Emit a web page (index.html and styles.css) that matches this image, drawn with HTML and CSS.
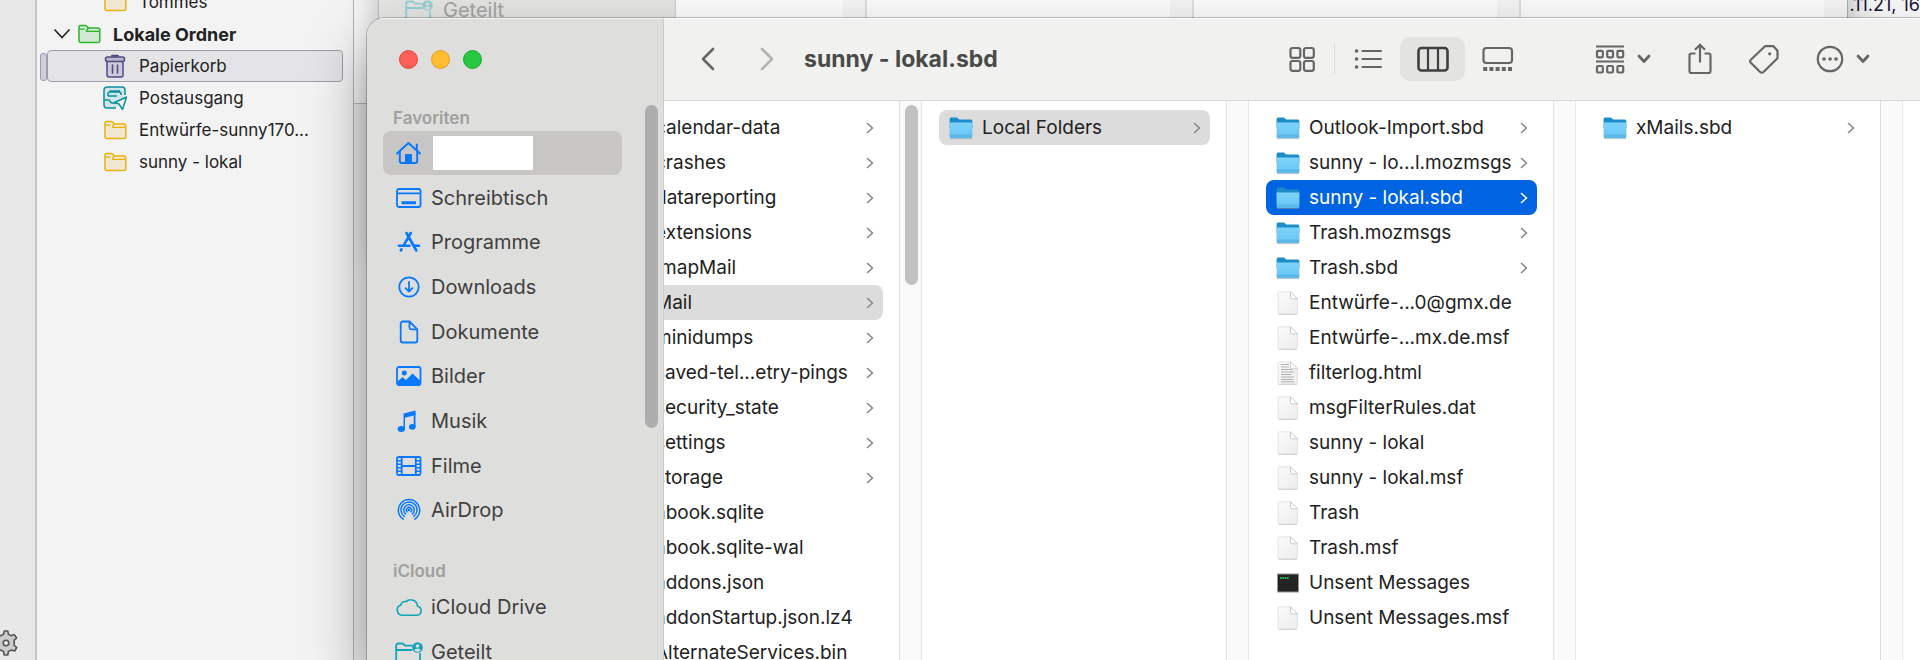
FILE: index.html
```html
<!DOCTYPE html>
<html lang="de">
<head>
  <meta charset="UTF-8" />
  <meta name="viewport" content="width=device-width, initial-scale=1.0" />
  <title>sunny - lokal.sbd</title>
  <link rel="stylesheet" href="styles.css">
</head>
<body>
  <!-- Shared icons -->
  <svg class="sprite" aria-hidden="true">
    <defs>
      <linearGradient id="folderFront" x1="0" y1="0" x2="0" y2="1">
        <stop offset="0" stop-color="#7fd3fb" />
        <stop offset="0.75" stop-color="#6bc8f6" />
        <stop offset="0.8" stop-color="#58b5e6" />
        <stop offset="1" stop-color="#5cbdec" />
      </linearGradient>
      <linearGradient id="paper" x1="0" y1="0" x2="1" y2="1">
        <stop offset="0" stop-color="#fbfbfb" />
        <stop offset="1" stop-color="#ececec" />
      </linearGradient>
    </defs>
    <symbol id="folder" viewBox="0 0 24 24">
      <path d="M1 22.6h22" stroke="#8a9aa5" stroke-width="1" opacity=".6" />
      <path d="M.6 3a1.6 1.6 0 0 1 1.6-1.6h5.6c1 0 1.400 2.200 3 2.200h11a1.600 1.600 0 0 1 1.600 1.600V12H.6z" fill="#1d8dca" />
      <path d="M.6 6.400h22.800v14.300a1.400 1.400 0 0 1-1.400 1.400H2a1.400 1.400 0 0 1-1.400-1.400z" fill="url(#folderFront)" />
    </symbol>
    <symbol id="file" viewBox="0 0 24 24">
      <path d="M4 .8h10.500l7 7v13.700a1.700 1.700 0 0 1-1.700 1.700H3.700A1.700 1.700 0 0 1 2 21.500V2.500A1.700 1.700 0 0 1 4 .8z" fill="url(#paper)" stroke="#dedede" stroke-width=".8" />
      <path d="M2.500 23.300h18.500" stroke="#cfcfcf" stroke-width="1" />
      <path d="M14.500.8v5.500a1.500 1.500 0 0 0 1.500 1.500h5.500z" fill="#fff" stroke="#c6c6c6" stroke-width=".9" />
    </symbol>
    <symbol id="textfile" viewBox="0 0 24 24">
      <use href="#file" />
      <path d="M5 3.500h8M5 6h8M5 8.500h11M5 11h13M5 13.500h10M5 16h13M5 18.500h12M5 20.800h13" stroke="#b2b2b2" stroke-width="1" />
    </symbol>
    <symbol id="exec" viewBox="0 0 24 24">
      <path d="M1 2.500h22v19H1z" fill="#8e979b" />
      <path d="M2 3.500h20v17H2z" fill="#242424" />
      <path d="M4 7h9" stroke="#34b054" stroke-width="2" stroke-dasharray="1.700 .6" />
    </symbol>
    <symbol id="more" viewBox="0 0 8 12">
      <path d="M1.500 1.500 6.500 6l-5 4.500" fill="none" stroke="currentColor" stroke-width="1.600" stroke-linecap="round" stroke-linejoin="round" />
    </symbol>
    <symbol id="caret" viewBox="0 0 14 10">
      <path d="M2 2l5 5.500L12 2" fill="none" stroke="currentColor" stroke-width="2.800" stroke-linecap="round" stroke-linejoin="round" />
    </symbol>
    <symbol id="mailfolder" viewBox="0 0 24 20">
      <path d="M2 17V3a1.500 1.500 0 0 1 1.500-1.500h5c1.500 0 2 2.500 3.500 2.500h9A1.700 1.700 0 0 1 22.800 5.700v11a1.800 1.800 0 0 1-1.800 1.800H3.500A1.600 1.600 0 0 1 2 17z" fill="currentColor" fill-opacity=".16" stroke="currentColor" stroke-width="1.500" />
      <path d="M2.500 5.200h5M9 7.300h13M9 7.300 11.500 4" fill="none" stroke="currentColor" stroke-width="1.300" />
    </symbol>
    <symbol id="shared" viewBox="0 0 28 24">
      <path d="M25 14v6a2 2 0 0 1-2 2H3.200a2 2 0 0 1-2-2V5.500a2 2 0 0 1 2-2h4.500l2.300 2.200h7M1.200 10h15.500" fill="none" stroke="currentColor" stroke-width="1.800" stroke-linecap="round" />
      <circle cx="22.500" cy="7.500" r="5.300" fill="currentColor" />
      <circle cx="22.500" cy="6" r="1.800" fill="#dededc" />
      <path d="M19.300 10.400a3.300 2.600 0 0 1 6.400 0 4.600 4.600 0 0 1-6.400 0z" fill="#dededc" />
    </symbol>
  </svg>

  <div class="desktop">
    <!-- Mail window -->
    <div class="mail">
      <div class="rail">
        <button class="settings" aria-label="Einstellungen">
          <svg viewBox="0 0 26 26"><path d="M10.600 4.200 11.200 1h3.600l.6 3.200a9 9 0 0 1 2.800 1.600l3.100-1.200 2.400 3.400-2.700 2.300c.4 1.700.4 3.300 0 4.900l2.700 2.300-2 3.500-3.500-1a9 9 0 0 1-2.800 1.600l-.6 3.400h-3.600l-.6-3.400a9 9 0 0 1-2.800-1.600l-3.500 1-2-3.500L5 15.200c-.4-1.600-.4-3.200 0-4.900L2.300 8l2.400-3.400 3.100 1.200a9 9 0 0 1 2.800-1.600z" fill="#ccc" stroke="#555" stroke-width="1.600" stroke-linejoin="round" /><circle cx="13" cy="13" r="2.800" fill="#eee" stroke="#555" stroke-width="1.600" /></svg>
        </button>
      </div>
      <div class="folder-pane">
        <ul class="folder-tree">
          <li class="tree-item yellow"><svg class="tree-icon"><use href="#mailfolder" /></svg>Tommes</li>
          <li class="tree-item account">
            <svg class="twisty" viewBox="0 0 18 12"><path d="M1.500 1.500 9 9.500l7.500-8" fill="none" stroke="#222" stroke-width="1.600" /></svg>
            <svg class="tree-icon green"><use href="#mailfolder" /></svg>Lokale Ordner
          </li>
          <li class="tree-item selected">
            <svg class="tree-icon trash" viewBox="0 0 24 24"><path d="M4 7h16v14a2 2 0 0 1-2 2H6a2 2 0 0 1-2-2z" fill="#cdcbdb" stroke="#4f4a80" stroke-width="1.500" /><rect x="2.500" y="3" width="19" height="4.500" rx="2" fill="#b9b6cf" stroke="#4f4a80" stroke-width="1.500" /><path d="M9 1.800h6" stroke="#4f4a80" stroke-width="2" stroke-linecap="round" /><path d="M9.500 11v8M14.500 11v8" stroke="#4f4a80" stroke-width="1.600" stroke-linecap="round" /></svg>
            Papierkorb
          </li>
          <li class="tree-item">
            <svg class="tree-icon outbox" viewBox="0 0 24 24" fill="none" stroke="#0d8f9c" stroke-width="1.500" stroke-linejoin="round"><path d="M13 22H4a3 3 0 0 1-3-3V4a3 3 0 0 1 3-3h15a3 3 0 0 1 3 3v5" fill="#cfe7ea" /><path d="M5 10V8a2 2 0 0 1 2-2h9a2 2 0 0 1 2 2v1M7 6V5h10" /><path d="M1.500 14h4.500c1 0 1 3 3 3h4M5 10h9" /><path d="M23.500 11 11.500 16.500l4.500 1.500 3.500 5.500z" fill="#f3f3f3" /></svg>
            Postausgang
          </li>
          <li class="tree-item yellow"><svg class="tree-icon"><use href="#mailfolder" /></svg>Entwürfe-sunny170...</li>
          <li class="tree-item yellow"><svg class="tree-icon"><use href="#mailfolder" /></svg>sunny - lokal</li>
        </ul>
      </div>
      <div class="message-pane">
        <div class="message-head"><span class="message-date">.11.21, 16</span></div>
      </div>
    </div>

    <!-- Finder window in the background -->
    <div class="back-window">
      <div class="back-sidebar"><svg class="side-icon"><use href="#shared" /></svg>Geteilt</div>
      <div class="back-columns">
        <div class="back-column first"></div>
        <div class="back-column"></div>
        <div class="back-column"></div>
        <div class="back-column"></div>
      </div>
    </div>

    <!-- Active Finder window -->
    <main class="finder">
      <aside class="sidebar">
        <div class="lights">
          <button class="light red" aria-label="Schließen"></button>
          <button class="light amber" aria-label="Minimieren"></button>
          <button class="light lime" aria-label="Zoomen"></button>
        </div>
        <div class="sidebar-body">
          <nav class="sidebar-nav">
            <h2 class="side-title">Favoriten</h2>
            <ul class="side-list">
              <li><a href="#" class="side-link current" aria-label="Benutzerordner"><svg class="side-icon" viewBox="0 0 28 24" fill="none" stroke="currentColor" stroke-width="2" stroke-linecap="round" stroke-linejoin="round"><path d="M2 12.500 13.500 2 25 12.500" /><path d="M4.800 10.500V20a2 2 0 0 0 2 2h13.400a2 2 0 0 0 2-2v-9.500M21.800 8.500V3.500" /><path d="M11 22v-8h5v8z" fill="currentColor" /></svg><span class="user-name"></span></a></li>
              <li><a href="#" class="side-link"><svg class="side-icon" viewBox="0 0 28 24" fill="none" stroke="currentColor" stroke-width="1.800"><rect x="2" y="3" width="23.500" height="18" rx="2" /><path d="M2 7.300h23.500" /><path d="M6.500 16.800h14.500" stroke-width="3" /></svg>Schreibtisch</a></li>
              <li><a href="#" class="side-link"><svg class="side-icon" viewBox="0 0 28 24" fill="none" stroke="currentColor" stroke-width="2.600" stroke-linecap="round"><path d="M15.800 3 8.500 15.700M11.500 3l9.800 17.500M4 15.700h10.500M19.500 15.700H24M6.500 19.300l-.7 1.200" /></svg>Programme</a></li>
              <li><a href="#" class="side-link"><svg class="side-icon" viewBox="0 0 28 24" fill="none" stroke="currentColor" stroke-width="1.800" stroke-linecap="round" stroke-linejoin="round"><circle cx="14" cy="12" r="9.700" /><path d="M14 7v9.500M10.500 13.200l3.500 3.500 3.500-3.500" /></svg>Downloads</a></li>
              <li><a href="#" class="side-link"><svg class="side-icon" viewBox="0 0 28 24" fill="none" stroke="currentColor" stroke-width="1.800" stroke-linejoin="round"><path d="M14.500 1.500H7.700a2 2 0 0 0-2 2v17a2 2 0 0 0 2 2h12.600a2 2 0 0 0 2-2V9.300z" /><path d="M14.500 1.500v6a1.800 1.800 0 0 0 1.800 1.800h6" /></svg>Dokumente</a></li>
              <li><a href="#" class="side-link"><svg class="side-icon" viewBox="0 0 28 24"><rect x="2" y="3" width="23.500" height="18" rx="2" fill="none" stroke="currentColor" stroke-width="1.800" /><circle cx="9.300" cy="8.900" r="2.500" fill="currentColor" /><path d="M2.500 17.500 7.500 13l3.500 3 6.500-6.500 7.500 7V20a1 1 0 0 1-1 1h-20.500a1 1 0 0 1-1-1z" fill="currentColor" /></svg>Bilder</a></li>
              <li><a href="#" class="side-link"><svg class="side-icon" viewBox="0 0 28 24" fill="currentColor"><path d="M8.500 4.500 20.500 1.500V6L10 8.700V20H8.500z" /><path d="M18.700 4h1.800v14h-1.800z" /><ellipse cx="6.300" cy="20" rx="3.700" ry="2.900" /><ellipse cx="17.300" cy="17.800" rx="3.400" ry="2.900" /></svg>Musik</a></li>
              <li><a href="#" class="side-link"><svg class="side-icon" viewBox="0 0 28 24" fill="none" stroke="currentColor" stroke-width="1.800"><rect x="2" y="3" width="23.500" height="18" rx="1.500" /><path d="M6.700 3v18M20.800 3v18M6.700 12h14.100" /><path d="M2 6.800h4.700M2 10.300h4.700M2 13.800h4.700M2 17.300h4.700M20.800 6.800h4.700M20.800 10.300h4.700M20.800 13.800h4.700M20.800 17.300h4.700" stroke-width="1.400" /></svg>Filme</a></li>
              <li><a href="#" class="side-link"><svg class="side-icon" viewBox="0 0 28 24" fill="none" stroke="currentColor" stroke-width="1.500" stroke-linecap="round"><path d="M8.200 21.200A10.700 10.700 0 1 1 19.800 21.200" /><path d="M9.300 18.400A8 8 0 1 1 18.700 18.400" /><path d="M10.600 16A5.200 5.200 0 1 1 17.400 16" /><path d="M12 13.800a2.600 2.600 0 1 1 4 0" /><circle cx="14" cy="12" r=".6" fill="currentColor" /></svg>AirDrop</a></li>
            </ul>
            <h2 class="side-title cloud-title">iCloud</h2>
            <ul class="side-list cloud">
              <li><a href="#" class="side-link"><svg class="side-icon" viewBox="0 0 28 24" fill="none" stroke="currentColor" stroke-width="1.600" stroke-linejoin="round"><path d="M7 20.200a5.200 5.200 0 0 1-1.200-10.100 3.900 3.900 0 0 1 5.200-3.400A6.800 6.800 0 0 1 22.500 11.300a4.500 4.500 0 0 1-.5 8.900z" /></svg>iCloud Drive</a></li>
              <li><a href="#" class="side-link"><svg class="side-icon"><use href="#shared" /></svg>Geteilt</a></li>
            </ul>
          </nav>
          <div class="thumb sidebar-thumb"></div>
        </div>
      </aside>

      <section class="content">
        <header class="toolbar">
          <div class="history">
            <button class="tool" aria-label="Zurück"><svg class="arrow" viewBox="0 0 14 24"><path d="M12 2 2 12l10 10" /></svg></button>
            <button class="tool faded" aria-label="Vor"><svg class="arrow" viewBox="0 0 14 24"><path d="M2 2l10 10L2 22" /></svg></button>
          </div>
          <h1 class="title">sunny - lokal.sbd</h1>
          <div class="views">
            <button class="view" aria-label="Symbole"><svg viewBox="0 0 32 26"><rect x="4.500" y="2" width="9.800" height="9.800" rx="2" /><rect x="18" y="2" width="9.800" height="9.800" rx="2" /><rect x="4.500" y="15" width="9.800" height="9.800" rx="2" /><rect x="18" y="15" width="9.800" height="9.800" rx="2" /></svg></button>
            <span class="divider"></span>
            <button class="view" aria-label="Liste"><svg viewBox="0 0 32 26"><path d="M10.500 5H29M10.500 13H29M10.500 21H29" stroke-linecap="round" /><path d="M4.500 5h.1M4.500 13h.1M4.500 21h.1" stroke-width="3.600" stroke-linecap="round" /></svg></button>
            <button class="view active" aria-label="Spalten"><svg viewBox="0 0 32 26"><rect x="1.500" y="2" width="29" height="22.500" rx="3" stroke-width="2.600" /><path d="M11 2v22.500M21 2v22.500" /></svg></button>
            <button class="view" aria-label="Galerie"><svg viewBox="0 0 32 26"><rect x="1.500" y="2" width="28.500" height="15" rx="3" /><path d="M1.200 23H31" stroke-width="4" stroke-dasharray="4 2.200" /></svg></button>
          </div>
          <div class="actions">
            <button class="tool menu" aria-label="Gruppieren"><svg class="group" viewBox="0 0 30 30"><path d="M1 2.500h28M1 17.500h28" /><rect x="2" y="6.800" width="5.800" height="6.500" rx="1" /><rect x="12.200" y="6.800" width="5.800" height="6.500" rx="1" /><rect x="22.400" y="6.800" width="5.800" height="6.500" rx="1" /><rect x="2" y="22" width="5.800" height="6.500" rx="1" /><rect x="12.200" y="22" width="5.800" height="6.500" rx="1" /><rect x="22.400" y="22" width="5.800" height="6.500" rx="1" /></svg><svg class="caret"><use href="#caret" /></svg></button>
            <button class="tool" aria-label="Teilen"><svg class="share" viewBox="0 0 24 32"><path d="M7.500 10.500H3.500a2 2 0 0 0-2 2V28a2 2 0 0 0 2 2h17a2 2 0 0 0 2-2V12.500a2 2 0 0 0-2-2h-4M12 19.500V2M7 6.800 12 1.800l5 5" /></svg></button>
            <button class="tool" aria-label="Tags"><svg class="tag" viewBox="0 0 30 30"><path d="M16 2.200h8.500l4 4.500v7.500L14.500 28a2.500 2.500 0 0 1-3.300 0L1.800 18.800a2 2 0 0 1 0-3z" stroke-linejoin="round" /><circle cx="20.700" cy="9.800" r="1.600" fill="currentColor" stroke="none" /></svg></button>
            <button class="tool menu" aria-label="Aktion"><svg class="dots" viewBox="0 0 28 28"><circle cx="14" cy="14" r="12.200" /><path d="M8 14h.1M14 14h.1M20 14h.1" stroke-width="3.600" stroke-linecap="round" /></svg><svg class="caret"><use href="#caret" /></svg></button>
          </div>
        </header>

        <div class="columns">
          <div class="column clipped">
            <ul class="items">
              <li class="item"><svg class="icon"><use href="#folder" /></svg><span class="name">calendar-data</span><svg class="go"><use href="#more" /></svg></li>
              <li class="item"><svg class="icon"><use href="#folder" /></svg><span class="name">crashes</span><svg class="go"><use href="#more" /></svg></li>
              <li class="item"><svg class="icon"><use href="#folder" /></svg><span class="name">datareporting</span><svg class="go"><use href="#more" /></svg></li>
              <li class="item"><svg class="icon"><use href="#folder" /></svg><span class="name">extensions</span><svg class="go"><use href="#more" /></svg></li>
              <li class="item"><svg class="icon"><use href="#folder" /></svg><span class="name">ImapMail</span><svg class="go"><use href="#more" /></svg></li>
              <li class="item open"><svg class="icon"><use href="#folder" /></svg><span class="name">Mail</span><svg class="go"><use href="#more" /></svg></li>
              <li class="item"><svg class="icon"><use href="#folder" /></svg><span class="name">minidumps</span><svg class="go"><use href="#more" /></svg></li>
              <li class="item"><svg class="icon"><use href="#folder" /></svg><span class="name">saved-tel...etry-pings</span><svg class="go"><use href="#more" /></svg></li>
              <li class="item"><svg class="icon"><use href="#folder" /></svg><span class="name">security_state</span><svg class="go"><use href="#more" /></svg></li>
              <li class="item"><svg class="icon"><use href="#folder" /></svg><span class="name">settings</span><svg class="go"><use href="#more" /></svg></li>
              <li class="item"><svg class="icon"><use href="#folder" /></svg><span class="name">storage</span><svg class="go"><use href="#more" /></svg></li>
              <li class="item"><svg class="icon"><use href="#file" /></svg><span class="name">abook.sqlite</span></li>
              <li class="item"><svg class="icon"><use href="#file" /></svg><span class="name">abook.sqlite-wal</span></li>
              <li class="item"><svg class="icon"><use href="#file" /></svg><span class="name">addons.json</span></li>
              <li class="item"><svg class="icon"><use href="#file" /></svg><span class="name">addonStartup.json.lz4</span></li>
              <li class="item"><svg class="icon"><use href="#file" /></svg><span class="name">AlternateServices.bin</span></li>
            </ul>
            <div class="track"><div class="thumb column-thumb"></div></div>
          </div>

          <div class="column">
            <ul class="items">
              <li class="item open"><svg class="icon"><use href="#folder" /></svg><span class="name">Local Folders</span><svg class="go"><use href="#more" /></svg></li>
            </ul>
            <div class="track"></div>
          </div>

          <div class="column">
            <ul class="items">
              <li class="item"><svg class="icon"><use href="#folder" /></svg><span class="name">Outlook-Import.sbd</span><svg class="go"><use href="#more" /></svg></li>
              <li class="item"><svg class="icon"><use href="#folder" /></svg><span class="name">sunny - lo...l.mozmsgs</span><svg class="go"><use href="#more" /></svg></li>
              <li class="item selected"><svg class="icon"><use href="#folder" /></svg><span class="name">sunny - lokal.sbd</span><svg class="go"><use href="#more" /></svg></li>
              <li class="item"><svg class="icon"><use href="#folder" /></svg><span class="name">Trash.mozmsgs</span><svg class="go"><use href="#more" /></svg></li>
              <li class="item"><svg class="icon"><use href="#folder" /></svg><span class="name">Trash.sbd</span><svg class="go"><use href="#more" /></svg></li>
              <li class="item"><svg class="icon"><use href="#file" /></svg><span class="name">Entwürfe-...0@gmx.de</span></li>
              <li class="item"><svg class="icon"><use href="#file" /></svg><span class="name">Entwürfe-...mx.de.msf</span></li>
              <li class="item"><svg class="icon"><use href="#textfile" /></svg><span class="name">filterlog.html</span></li>
              <li class="item"><svg class="icon"><use href="#file" /></svg><span class="name">msgFilterRules.dat</span></li>
              <li class="item"><svg class="icon"><use href="#file" /></svg><span class="name">sunny - lokal</span></li>
              <li class="item"><svg class="icon"><use href="#file" /></svg><span class="name">sunny - lokal.msf</span></li>
              <li class="item"><svg class="icon"><use href="#file" /></svg><span class="name">Trash</span></li>
              <li class="item"><svg class="icon"><use href="#file" /></svg><span class="name">Trash.msf</span></li>
              <li class="item"><svg class="icon"><use href="#exec" /></svg><span class="name">Unsent Messages</span></li>
              <li class="item"><svg class="icon"><use href="#file" /></svg><span class="name">Unsent Messages.msf</span></li>
            </ul>
            <div class="track"></div>
          </div>

          <div class="column">
            <ul class="items">
              <li class="item"><svg class="icon"><use href="#folder" /></svg><span class="name">xMails.sbd</span><svg class="go"><use href="#more" /></svg></li>
            </ul>
            <div class="track"></div>
          </div>
        </div>
      </section>
    </main>
  </div>
</body>
</html>
```
FILE: styles.css
```css
* {
  box-sizing: border-box;
}
body {
  margin: 0;
  font-family: Inter, "Liberation Sans", sans-serif;
  font-size: 19px;
  color: #222;
}
ul {
  list-style: none;
  margin: 0;
  padding: 0;
}
h1, h2 {
  margin: 0;
}
button {
  border: none;
  background: none;
  padding: 0;
  color: inherit;
}
svg {
  display: block;
  flex: none;
}
.sprite {
  position: absolute;
  width: 0;
  height: 0;
}
.desktop {
  position: relative;
  height: 100vh;
  overflow: hidden;
}

/* Mail window */
.mail {
  display: flex;
  height: 100%;
}
.rail {
  width: 37px;
  display: flex;
  flex-direction: column;
  justify-content: flex-end;
  padding-bottom: 4px;
  background: #e8e8e8;
  border-right: 2px solid #c6c6c6;
}
.settings svg {
  width: 26px;
  height: 26px;
}
.settings {
  margin-left: -7px;
}
.folder-pane {
  width: 317px;
  overflow: hidden;
  background: #f3f3f3;
  border-right: 1px solid #b4b4b4;
}
.folder-tree {
  margin-top: -14px;
  padding: 0 10px;
}
.tree-item {
  display: flex;
  align-items: center;
  gap: 12px;
  height: 32px;
  padding-left: 55px;
  font-size: 17px;
  border: 1px solid transparent;
  white-space: nowrap;
}
.tree-item.account {
  padding-left: 5px;
  font-size: 18px;
  font-weight: 700;
}
.tree-item.selected {
  background: #e4e4e7;
  border-color: #9c9cab;
  border-radius: 4px;
  position: relative;
}
.tree-item.selected::before {
  content: "";
  position: absolute;
  left: -8px;
  top: 2px;
  width: 5px;
  height: 26px;
  border: 1px solid #9c9cab;
  border-radius: 3px;
  background: #cfcfd8;
}
.tree-icon {
  width: 24px;
  height: 20px;
}
.trash, .outbox {
  height: 24px;
}
.yellow .tree-icon {
  color: #e8b010;
}
.tree-icon.green {
  color: #2bb52b;
}
.twisty {
  width: 18px;
  height: 12px;
  margin-right: -6px;
}
.message-pane {
  flex: 1;
  background: #ececec;
}
.message-head {
  display: flex;
  justify-content: flex-end;
  height: 104px;
  background: #f8f8f8;
  border-bottom: 1px solid #bbb;
}
.message-date {
  margin-top: -6px;
  font-size: 18px;
  color: #1b1340;
}

/* Background Finder window */
.back-window {
  position: absolute;
  top: -40px;
  left: 378px;
  right: 72px;
  height: 300px;
  display: flex;
  background: #fbfbfb;
  border-left: 1px solid #b9b9b9;
  border-right: 1px solid #aaa;
  box-shadow: 0 0 30px rgba(0, 0, 0, 0.25);
}
.back-sidebar {
  display: flex;
  align-items: center;
  gap: 10px;
  width: 297px;
  height: 100px;
  padding-left: 26px;
  font-size: 20px;
  color: #a3a3a1;
  background: #e4e4e2;
  border-right: 1px solid #cfcfcd;
}
.back-sidebar .side-icon {
  color: #93cfd6;
}
.back-columns {
  flex: 1;
  display: flex;
  overflow: hidden;
}
.back-column {
  flex: none;
  width: 327px;
  border-right: 23px solid #f3f3f3;
  outline: 1px solid #dedede;
}
.back-column.first {
  width: 190px;
}

/* Active Finder window */
.finder {
  position: absolute;
  top: 18px;
  left: 367px;
  right: 0;
  bottom: 0;
  display: flex;
  background: #fff;
  border-top-left-radius: 18px;
  overflow: hidden;
  box-shadow: 0 0 0 1px rgba(0, 0, 0, 0.22), 0 30px 60px rgba(0, 0, 0, 0.4);
}
.sidebar {
  width: 297px;
  flex: none;
  display: flex;
  flex-direction: column;
  background: #dededc;
  border-right: 1px solid #cbcbc9;
  border-top: 1px solid #f6f6f5;
}
.lights {
  flex: none;
  display: flex;
  gap: 13px;
  padding: 31px 0 0 32px;
  height: 86px;
}
.light {
  width: 19px;
  height: 19px;
  border-radius: 50%;
}
.light.red {
  background: #ff5f57;
  border: 1px solid #e2463f;
}
.light.amber {
  background: #febc2e;
  border: 1px solid #e0a023;
}
.light.lime {
  background: #28c840;
  border: 1px solid #1bac2c;
}
.sidebar-body {
  display: flex;
  justify-content: space-between;
  padding: 0 5px 0 16px;
}
.sidebar-nav {
  width: 239px;
}
.side-title {
  padding: 2px 0 2px 10px;
  font-size: 17px;
  line-height: 22px;
  font-weight: 600;
  color: #a0a09e;
}
.cloud-title {
  padding-top: 27px;
  padding-bottom: 3px;
}
.side-list {
  display: grid;
  grid-auto-rows: 1fr;
  height: 402px;
}
.side-list.cloud {
  height: 90px;
}
.side-link {
  display: flex;
  align-items: center;
  gap: 8px;
  height: 44px;
  padding-left: 12px;
  border-radius: 8px;
  font-size: 20px;
  color: #3f3f3e;
  text-decoration: none;
}
.side-link.current {
  background: #c7c6c4;
}
.side-icon {
  width: 28px;
  height: 24px;
  color: #0a78fc;
}
.cloud .side-icon {
  color: #12a5b8;
}
.user-name {
  width: 100px;
  height: 34px;
  margin-left: 2px;
  background: #fff;
}
.thumb {
  width: 13px;
  border-radius: 7px;
}
.sidebar-thumb {
  height: 323px;
  background: #adadad;
}
.content {
  flex: 1;
  min-width: 0;
  display: flex;
  flex-direction: column;
}

/* Toolbar */
.toolbar {
  display: flex;
  align-items: center;
  height: 83px;
  padding: 0 50px 2px 37px;
  background: #f1f1ef;
  border-bottom: 1px solid #d9d9d8;
  border-top: 1px solid #fdfdfd;
  color: #666;
}
.toolbar svg {
  fill: none;
  stroke: currentColor;
  stroke-width: 2.2;
}
.history {
  display: flex;
  gap: 45px;
}
.toolbar .arrow {
  width: 14px;
  height: 24px;
  stroke-width: 2.6;
  stroke-linecap: round;
  stroke-linejoin: round;
}
.faded {
  color: #b2b2b1;
}
.title {
  margin-left: 30px;
  font-size: 23px;
  font-weight: 700;
  color: #4a4a49;
  white-space: nowrap;
}
.views {
  display: flex;
  align-items: center;
  margin-left: auto;
}
.view {
  display: flex;
  align-items: center;
  justify-content: center;
  width: 65px;
  height: 44px;
  border-radius: 10px;
}
.view svg {
  width: 32px;
  height: 26px;
}
.view.active {
  background: #e3e3e1;
  color: #3f3f3f;
}
.divider {
  width: 1px;
  height: 31px;
  background: #dcdcdb;
}
.actions {
  display: flex;
  align-items: center;
  gap: 37px;
  margin-left: 65px;
}
.menu {
  display: flex;
  align-items: center;
  gap: 12px;
}
.group, .tag {
  width: 30px;
  height: 30px;
}
.share {
  width: 24px;
  height: 32px;
}
.dots {
  width: 28px;
  height: 28px;
}
.caret {
  width: 14px;
  height: 10px;
}

/* Columns */
.columns {
  flex: 1;
  display: flex;
  overflow: hidden;
}
.column {
  flex: none;
  display: flex;
  width: 327px;
}
.column.clipped {
  margin-left: -69px;
}
.items {
  flex: 1;
  min-width: 0;
  padding: 9px 16px 0 17px;
}
.item {
  display: flex;
  align-items: center;
  gap: 9px;
  height: 35px;
  padding: 0 9px 0 10px;
  border-radius: 8px;
}
.icon {
  width: 24px;
  height: 24px;
}
.name {
  flex: 1;
  min-width: 0;
  white-space: nowrap;
}
.go {
  width: 8px;
  height: 12px;
  color: #868686;
}
.item.open {
  background: #dcdcdc;
}
.item.selected {
  background: #0063e1;
  color: #fff;
}
.item.selected .go {
  color: #fff;
}
.track {
  width: 23px;
  padding: 4px 0 0 5px;
  background: #fafafa;
  border-left: 1px solid #e0e0e0;
  border-right: 1px solid #e6e6e6;
}
.column-thumb {
  height: 180px;
  background: #c1c1c1;
}
```
